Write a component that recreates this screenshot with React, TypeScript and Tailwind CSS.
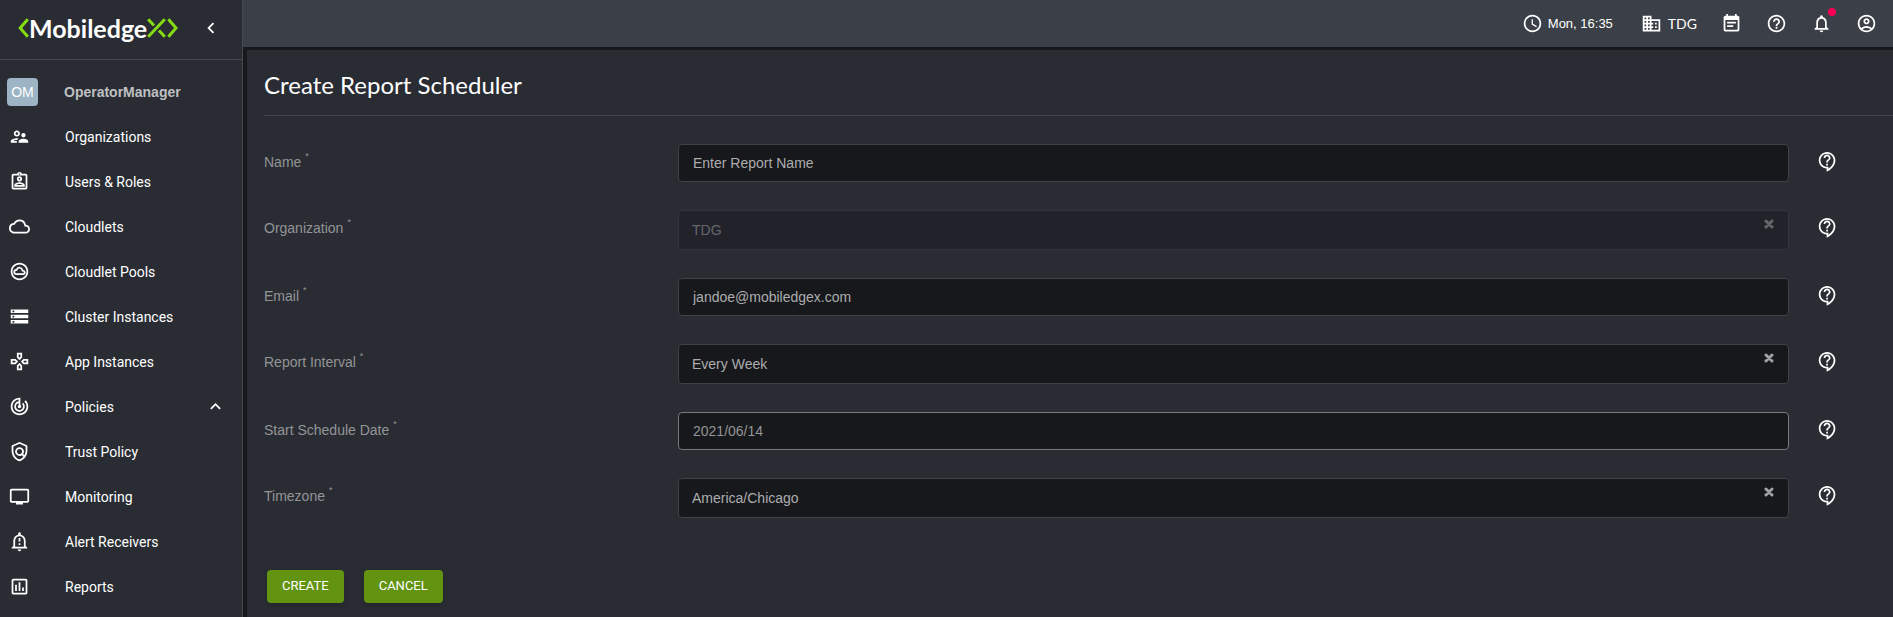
import { useState } from "react";
import type { ReactNode } from "react";
import type { IconType } from "react-icons";
import {
  MdAccessTime,
  MdChevronLeft,
  MdEventNote,
  MdExpandLess,
  MdHelpOutline,
  MdNotificationsNone,
  MdOutlineAccountCircle,
  MdOutlineAssessment,
  MdOutlineAssignmentInd,
  MdOutlineBusiness,
  MdOutlineCloud,
  MdOutlineCloudCircle,
  MdOutlineContactSupport,
  MdOutlineGamepad,
  MdOutlineNotificationImportant,
  MdOutlinePolicy,
  MdOutlineSupervisorAccount,
  MdOutlineTv,
  MdStorage,
  MdTrackChanges,
} from "react-icons/md";

type NavItem = { label: string; icon: IconType; expanded?: boolean };

const navItems: NavItem[] = [
  { label: "Organizations", icon: MdOutlineSupervisorAccount },
  { label: "Users & Roles", icon: MdOutlineAssignmentInd },
  { label: "Cloudlets", icon: MdOutlineCloud },
  { label: "Cloudlet Pools", icon: MdOutlineCloudCircle },
  { label: "Cluster Instances", icon: MdStorage },
  { label: "App Instances", icon: MdOutlineGamepad },
  { label: "Policies", icon: MdTrackChanges, expanded: true },
  { label: "Trust Policy", icon: MdOutlinePolicy },
  { label: "Monitoring", icon: MdOutlineTv },
  { label: "Alert Receivers", icon: MdOutlineNotificationImportant },
  { label: "Reports", icon: MdOutlineAssessment },
];

function Logo() {
  return (
    <a href="#" aria-label="MobiledgeX" className="flex items-center text-white">
      <svg width="11" height="20" viewBox="0 0 11 20" fill="none" stroke="#86dc12" strokeWidth="3">
        <path d="M9.8 1.2 2.2 10l7.6 8.8" />
      </svg>
      <span className="font-['Lato',sans-serif] text-[25px] leading-7 font-bold">Mobiledge</span>
      <svg width="32" height="20" viewBox="0 0 32 20" fill="none" stroke="#86dc12" strokeWidth="3">
        <path d="M1.2 18.8 17.8 1.2M1.2 1.2l5.8 6.4M12 12.6l5.8 6.2" />
        <path d="M21.4 1.2 29 10l-7.6 8.8" />
      </svg>
    </a>
  );
}

function Sidebar() {
  return (
    <aside className="w-[243px] shrink-0 border-r border-[#46474c] bg-[#292c33]">
      <div className="flex h-[60px] items-center justify-between border-b border-[#46474c] pr-5 pb-1 pl-[18px]">
        <Logo />
        <button type="button" aria-label="Collapse menu" className="text-white">
          <MdChevronLeft size={22} />
        </button>
      </div>
      <nav className="pt-[9px] font-['Roboto',sans-serif] text-sm">
        <div className="flex h-[45px] items-center gap-[26px] pl-[7px]">
          <span className="flex h-7 w-[31px] items-center justify-center rounded bg-[#9db4c5] font-['Liberation_Sans',sans-serif] text-white">
            OM
          </span>
          <span className="font-['Liberation_Sans',sans-serif] font-bold text-[#bfc0c2]">
            OperatorManager
          </span>
        </div>
        <ul>
          {navItems.map(({ label, icon: Icon, expanded }) => (
            <li key={label}>
              <a href="#" className="flex h-[45px] items-center gap-[35px] pr-4 pl-[9px] text-white">
                <Icon size={21} className="shrink-0" />
                <span className="flex-1">{label}</span>
                {expanded && <MdExpandLess size={21} />}
              </a>
            </li>
          ))}
        </ul>
      </nav>
    </aside>
  );
}

function TopBar() {
  return (
    <header className="flex h-[47px] items-center justify-end bg-[#3b3f47] pr-4 text-white">
      <div className="mr-7 flex items-center gap-[5px] font-['Liberation_Sans',sans-serif] text-[13px]">
        <MdAccessTime size={21} />
        <span>Mon, 16:35</span>
      </div>
      <div className="mr-6 flex items-center gap-[6px] font-['Lato',sans-serif] text-sm">
        <MdOutlineBusiness size={21} />
        <span>TDG</span>
      </div>
      <div className="flex items-center gap-6">
        <button type="button" aria-label="Events">
          <MdEventNote size={21} />
        </button>
        <button type="button" aria-label="Help">
          <MdHelpOutline size={21} />
        </button>
        <button type="button" aria-label="Notifications" className="relative">
          <MdNotificationsNone size={21} />
          <span className="absolute -top-[5px] -right-1 size-2 rounded-full bg-[#f50057]" />
        </button>
        <button type="button" aria-label="Account">
          <MdOutlineAccountCircle size={21} />
        </button>
      </div>
    </header>
  );
}

function Field({ id, label, children }: { id: string; label: string; children: ReactNode }) {
  return (
    <div className="grid grid-cols-[414px_1fr_104px] items-start">
      <label htmlFor={id} className="flex h-9 items-center gap-1 text-[#939496]">
        {label}
        <span className="-mt-3 text-[9px]">*</span>
      </label>
      {children}
      <button
        type="button"
        aria-label={`Help for ${label}`}
        className="flex h-[34px] items-center justify-self-start pl-7 text-white"
      >
        <MdOutlineContactSupport size={21} />
      </button>
    </div>
  );
}

function TextField({
  id,
  label,
  placeholder,
  initial = "",
  active = false,
}: {
  id: string;
  label: string;
  placeholder?: string;
  initial?: string;
  active?: boolean;
}) {
  const [value, setValue] = useState(initial);
  return (
    <Field id={id} label={label}>
      <input
        id={id}
        type="text"
        value={value}
        placeholder={placeholder}
        onChange={(e) => setValue(e.target.value)}
        className={`h-[38px] w-full rounded border bg-[#17181b] px-[14px] outline-none placeholder:text-[#acadaf] ${
          active ? "border-[#77797c] text-[#939496]" : "border-[#414245] text-[#acadaf]"
        }`}
      />
    </Field>
  );
}

function SelectField({
  id,
  label,
  options,
  disabled = false,
}: {
  id: string;
  label: string;
  options: string[];
  disabled?: boolean;
}) {
  const [value, setValue] = useState(options[0]);
  return (
    <Field id={id} label={label}>
      <div className="relative">
        <select
          id={id}
          value={value}
          disabled={disabled}
          onChange={(e) => setValue(e.target.value)}
          className={`h-10 w-full appearance-none rounded border px-[13px] outline-none ${
            disabled
              ? "border-[#33353b] bg-[#22222b] text-[#66676b] opacity-100"
              : "border-[#414245] bg-[#17181b] text-[#acadaf]"
          }`}
        >
          {options.map((option) => (
            <option key={option}>{option}</option>
          ))}
        </select>
        <button
          type="button"
          aria-label={`Clear ${label}`}
          disabled={disabled}
          onClick={() => setValue("")}
          className={`absolute top-[9px] right-[15px] ${disabled ? "text-[#66676b]" : "text-[#a0a1a3]"}`}
        >
          <svg
            width="10"
            height="10"
            viewBox="0 0 10 10"
            stroke="currentColor"
            strokeWidth="3"
            strokeLinecap="round"
            className="block"
          >
            <path d="M2 2l6 6M8 2 2 8" />
          </svg>
        </button>
      </div>
    </Field>
  );
}

export default function App() {
  return (
    <div className="flex min-h-screen bg-[#17181b]">
      <Sidebar />
      <div className="flex min-w-0 flex-1 flex-col">
        <TopBar />
        <main className="mt-[3px] ml-1 flex-1 bg-[#292c33] pl-[17px]">
          <h1 className="border-b border-[#3f4248] pt-5 pb-[15px] font-['Lato',sans-serif] text-2xl leading-[30px] text-white">
            Create Report Scheduler
          </h1>
          <form
            className="pt-7 font-['Liberation_Sans',sans-serif] text-sm"
            onSubmit={(e) => e.preventDefault()}
          >
            <div className="flex flex-col gap-7">
              <TextField id="name" label="Name" placeholder="Enter Report Name" />
              <SelectField id="organization" label="Organization" options={["TDG"]} disabled />
              <TextField id="email" label="Email" initial="jandoe@mobiledgex.com" />
              <SelectField id="interval" label="Report Interval" options={["Every Week"]} />
              <TextField id="start-date" label="Start Schedule Date" initial="2021/06/14" active />
              <SelectField id="timezone" label="Timezone" options={["America/Chicago"]} />
            </div>
            <div className="mt-[52px] flex gap-5 pl-[3px] font-['Roboto',sans-serif] text-[13px] text-white">
              <button type="submit" className="h-[33px] rounded bg-[#629412] px-[15px] shadow-md">
                CREATE
              </button>
              <button type="button" className="h-[33px] rounded bg-[#629412] px-[15px] shadow-md">
                CANCEL
              </button>
            </div>
          </form>
        </main>
      </div>
    </div>
  );
}
